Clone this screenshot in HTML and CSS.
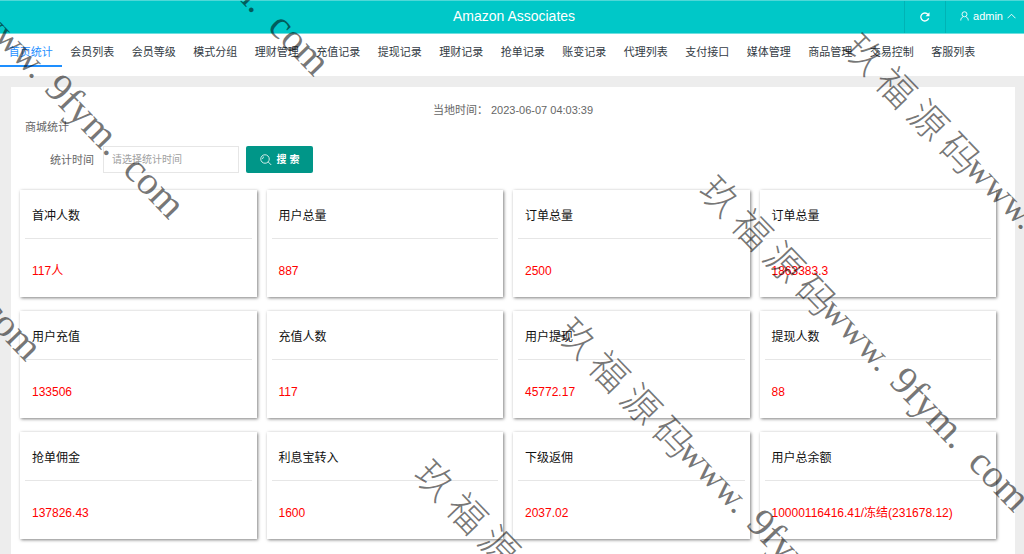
FILE: index.html
```html
<!DOCTYPE html>
<html lang="zh-CN">
<head>
  <meta charset="UTF-8">
  <meta name="viewport" content="width=device-width, initial-scale=1.0">
  <title>Amazon Associates</title>
  <link rel="stylesheet" href="styles.css">
</head>
<body>
  <!-- 顶部 -->
  <header class="header">
    <h1 class="header-title">Amazon Associates</h1>
    <div class="header-tools">
      <button class="refresh" type="button" title="刷新">
        <svg width="10" height="10" viewBox="0 0 20 20" fill="none" stroke="currentColor" stroke-width="2.6"><path d="M17.3 12.5A8 8 0 1 1 16 5"/><path d="M19 0.5v8h-8z" fill="currentColor" stroke="none"/></svg>
      </button>
      <a class="user" href="#">
        <svg width="9" height="10" viewBox="0 0 18 20" fill="none" stroke="currentColor" stroke-width="1.8"><circle cx="9" cy="6.5" r="5"/><path d="M1.5 19c0-4 2-6.500 5-7.500M16.500 19c0-4-2-6.500-5-7.500"/></svg>
        <span>admin</span>
        <svg width="9" height="6" viewBox="0 0 18 12" fill="none" stroke="currentColor" stroke-width="1.8"><path d="M1 10.500l8-8 8 8"/></svg>
      </a>
    </div>
  </header>

  <!-- 导航 -->
  <nav class="nav">
    <a class="active" href="#">首页统计</a>
    <a href="#">会员列表</a>
    <a href="#">会员等级</a>
    <a href="#">模式分组</a>
    <a href="#">理财管理</a>
    <a href="#">充值记录</a>
    <a href="#">提现记录</a>
    <a href="#">理财记录</a>
    <a href="#">抢单记录</a>
    <a href="#">账变记录</a>
    <a href="#">代理列表</a>
    <a href="#">支付接口</a>
    <a href="#">媒体管理</a>
    <a href="#">商品管理</a>
    <a href="#">交易控制</a>
    <a href="#">客服列表</a>
  </nav>

  <!-- 内容 -->
  <main class="panel">
    <p class="clock">当地时间： <time>2023-06-07 04:03:39</time></p>
    <h2 class="panel-title">商城统计</h2>

    <form class="search">
      <label for="date">统计时间</label>
      <input id="date" type="text" placeholder="请选择统计时间">
      <button type="button">
        <svg width="12" height="12" viewBox="0 0 24 24" fill="none" stroke="currentColor" stroke-width="1.6"><circle cx="10" cy="10" r="8.500"/><path d="M5 10a5 5 0 0 1 3-4.500M16.500 16l6 6" /></svg>
        搜 索
      </button>
    </form>

    <section class="cards">
      <div class="card"><h3>首冲人数</h3><p>117人</p></div>
      <div class="card"><h3>用户总量</h3><p>887</p></div>
      <div class="card"><h3>订单总量</h3><p>2500</p></div>
      <div class="card"><h3>订单总量</h3><p>1863383.3</p></div>
      <div class="card"><h3>用户充值</h3><p>133506</p></div>
      <div class="card"><h3>充值人数</h3><p>117</p></div>
      <div class="card"><h3>用户提现</h3><p>45772.17</p></div>
      <div class="card"><h3>提现人数</h3><p>88</p></div>
      <div class="card"><h3>抢单佣金</h3><p>137826.43</p></div>
      <div class="card"><h3>利息宝转入</h3><p>1600</p></div>
      <div class="card"><h3>下级返佣</h3><p>2037.02</p></div>
      <div class="card"><h3>用户总余额</h3><p>10000116416.41/冻结(231678.12)</p></div>
    </section>
  </main>

  <!-- 水印 -->
  <svg class="watermark" aria-hidden="true">
    <defs>
      <g id="mark">
        <text class="mark-name" x="-19 27 73 119" y="14">玖福源码</text>
        <text class="mark-www" x="153" y="9">www.</text>
        <text x="251" y="9">9fym.</text>
        <text x="364" y="9">com</text>
      </g>
    </defs>
    <use href="#mark" transform="translate(20 -240) rotate(46)"/>
    <use href="#mark" transform="translate(-125 -97) rotate(46)"/>
    <use href="#mark" transform="translate(-268 45) rotate(46)"/>
    <use href="#mark" transform="translate(864 54) rotate(46)"/>
    <use href="#mark" transform="translate(720 196) rotate(46)"/>
    <use href="#mark" transform="translate(577 338) rotate(46)"/>
    <use href="#mark" transform="translate(435 480) rotate(46)"/>
  </svg>
</body>
</html>
```

FILE: styles.css
```css
* {
  box-sizing: border-box;
}

body {
  display: flex;
  flex-direction: column;
  min-height: 100vh;
  margin: 0;
  background: #ededed;
  color: #666;
  font: 11px/16px "Liberation Sans", "Noto Sans CJK SC", sans-serif;
}

h1, h2, h3, p {
  margin: 0;
  font-weight: normal;
}

a {
  color: inherit;
  text-decoration: none;
}

button, input {
  font: inherit;
}

/* 顶部 */
.header {
  display: grid;
  grid-template-columns: 1fr auto 1fr;
  height: 34px;
  border-top: 1px solid #4fd8d8;
  border-bottom: 1px solid #6fdfdf;
  background: #00c8c8;
  color: #fff;
}

.header-title {
  grid-column: 2;
  margin-left: 4px;
  font-size: 14px;
  line-height: 31px;
}

.header-tools {
  display: flex;
  justify-content: flex-end;
}

.refresh {
  width: 42px;
  padding: 0;
  border: solid #00b3b5;
  border-width: 0 1px;
  background: none;
  color: #fff;
  cursor: pointer;
}

.refresh svg {
  display: block;
  margin: 0 auto;
}

.user {
  display: flex;
  align-items: center;
  gap: 4px;
  padding: 0 8px 2px 14px;
}

/* 导航 */
.nav {
  display: grid;
  grid-template-columns: repeat(16, 1fr);
  height: 42px;
  padding-right: 40px;
  background: #fff;
  color: #333b44;
  text-align: center;
  white-space: nowrap;
}

.nav a {
  height: 33px;
  line-height: 36px;
}

.nav .active {
  border-bottom: 2px solid #1e8fff;
  color: #1e8fff;
}

/* 内容 */
.panel {
  flex: 1;
  margin: 11px 9px 0 11px;
  padding: 15px 19px 15px 9px;
  background: #fff;
}

.clock {
  padding-left: 10px;
  text-align: center;
}

.panel-title {
  padding: 1px 0 0 5px;
  font-size: 11px;
}

.search {
  display: flex;
  align-items: center;
  margin: 11px 0 17px;
  padding-left: 30px;
}

.search input {
  width: 136px;
  height: 27px;
  margin: 0 7px 0 9px;
  padding: 0 8px;
  border: 1px solid #e6e6e6;
  background: #fff;
  font-size: 10px;
}

.search input::placeholder {
  color: #a0a0a0;
}

.search button {
  display: flex;
  align-items: center;
  justify-content: center;
  gap: 5px;
  width: 67px;
  height: 27px;
  padding: 0;
  border: 0;
  border-radius: 2px;
  background: #009688;
  color: #fff;
  font-size: 10px;
  font-weight: bold;
  cursor: pointer;
}

.cards {
  display: grid;
  grid-template-columns: repeat(4, 1fr);
  gap: 14px 10px;
}

.card {
  height: 107px;
  padding: 0 5px;
  background: #fff;
  box-shadow: 1px 1px 3px rgba(0, 0, 0, 0.5);
  font-size: 12px;
}

.card h3 {
  height: 49px;
  padding: 0 7px;
  border-bottom: 1px solid #e6e6e6;
  color: #111;
  font-size: 12px;
  line-height: 52px;
}

.card p {
  padding: 0 7px;
  color: #f00;
  line-height: 64px;
}

/* 水印 */
.watermark {
  position: absolute;
  top: 0;
  left: 0;
  width: 100%;
  height: 100%;
  overflow: hidden;
  pointer-events: none;
  fill: rgba(0, 0, 0, 0.55);
  font-family: "Liberation Serif", "Noto Sans CJK SC", serif;
  font-size: 40px;
  font-weight: 300;
}

.mark-name {
  font-size: 38px;
}

.mark-www {
  font-size: 36px;
}
```
